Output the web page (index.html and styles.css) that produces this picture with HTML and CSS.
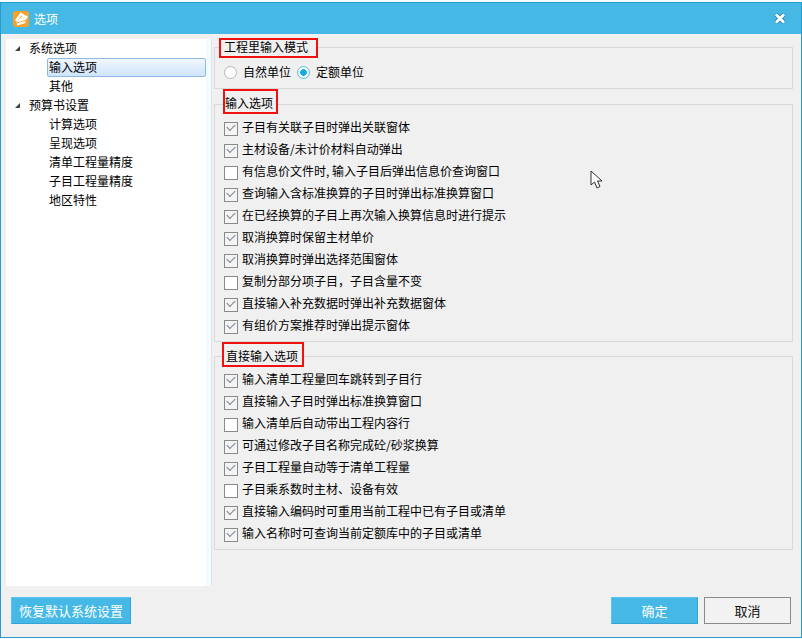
FILE: index.html
```html
<!DOCTYPE html>
<html lang="zh-CN">
<head>
<meta charset="utf-8">
<title>选项</title>
<link rel="stylesheet" href="styles.css">
</head>
<body>
<div class="window">
  <header class="titlebar">
    <svg class="logo" width="16" height="16" viewBox="0 0 16 16"><rect width="16" height="16" rx="3" fill="#f7a12b"/><path d="M3 10 L8 3 L11 5 L7 9.5 L12 8 L14 5" fill="none" stroke="#fff" stroke-width="2.4"/><path d="M4 13.5 L12.5 11" fill="none" stroke="#fff" stroke-width="2"/></svg>
    <span class="title">选项</span>
    <svg class="close" width="12" height="11" viewBox="0 0 12 11"><path d="M2 1.5 L10 9.5 M10 1.5 L2 9.5" stroke="#2b7fa8" stroke-width="4.4"/><path d="M2 1.5 L10 9.5 M10 1.5 L2 9.5" stroke="#fff" stroke-width="2.8"/></svg>
  </header>
  <div class="content">
    <div class="main">
      <nav class="tree">
        <div class="tree-node"><i class="arrow"></i>系统选项</div>
        <div class="tree-leaf selected">输入选项</div>
        <div class="tree-leaf">其他</div>
        <div class="tree-node"><i class="arrow"></i>预算书设置</div>
        <div class="tree-leaf">计算选项</div>
        <div class="tree-leaf">呈现选项</div>
        <div class="tree-leaf">清单工程量精度</div>
        <div class="tree-leaf">子目工程量精度</div>
        <div class="tree-leaf">地区特性</div>
      </nav>
      <div class="panel">
        <section class="group group-mode">
          <h2 class="legend legend-mode">工程里输入模式</h2>
          <div class="radios">
            <label class="radio"><i class="radio-mark"></i>自然单位</label>
            <label class="radio"><i class="radio-mark on"></i>定额单位</label>
          </div>
        </section>
        <section class="group group-input">
          <h2 class="legend legend-input">输入选项</h2>
          <div class="check on">子目有关联子目时弹出关联窗体</div>
          <div class="check on">主材设备/未计价材料自动弹出</div>
          <div class="check">有信息价文件时, 输入子目后弹出信息价查询窗口</div>
          <div class="check on">查询输入含标准换算的子目时弹出标准换算窗口</div>
          <div class="check on">在已经换算的子目上再次输入换算信息时进行提示</div>
          <div class="check on">取消换算时保留主材单价</div>
          <div class="check on">取消换算时弹出选择范围窗体</div>
          <div class="check">复制分部分项子目，子目含量不变</div>
          <div class="check on">直接输入补充数据时弹出补充数据窗体</div>
          <div class="check on">有组价方案推荐时弹出提示窗体</div>
        </section>
        <section class="group group-direct">
          <h2 class="legend legend-direct">直接输入选项</h2>
          <div class="check on">输入清单工程量回车跳转到子目行</div>
          <div class="check on">直接输入子目时弹出标准换算窗口</div>
          <div class="check">输入清单后自动带出工程内容行</div>
          <div class="check on">可通过修改子目名称完成砼/砂浆换算</div>
          <div class="check on">子目工程量自动等于清单工程量</div>
          <div class="check">子目乘系数时主材、设备有效</div>
          <div class="check on">直接输入编码时可重用当前工程中已有子目或清单</div>
          <div class="check on">输入名称时可查询当前定额库中的子目或清单</div>
        </section>
      </div>
    </div>
    <footer class="footer">
      <button class="btn btn-primary btn-reset">恢复默认系统设置</button>
      <div class="actions">
        <button class="btn btn-primary btn-action">确定</button>
        <button class="btn btn-default btn-action">取消</button>
      </div>
    </footer>
  </div>
  <svg class="cursor" width="14" height="20" viewBox="0 0 14 20"><path d="M1 1 V15 L4.5 12 L7 18 L10 16.5 L7.5 11 H12 Z" fill="#fff" stroke="#333" stroke-width="1"/></svg>
</div>
</body>
</html>
```
FILE: styles.css
```css
* { box-sizing: border-box; }
html, body { margin: 0; height: 100%; background: #fff; }
body { padding-top: 2px; font: 12px/16px "Noto Sans CJK SC", "Liberation Sans", sans-serif; color: #000; }
.window { position: relative; width: 802px; height: 636px; display: flex; flex-direction: column; background: #f0f0f0; border: 1px solid #2a9bc9; }
.titlebar { flex: 0 0 31px; display: flex; align-items: center; padding: 0 15px 0 12px; background: #45b8e6; color: #fff; }
.logo { margin-right: 5px; }
.title { font-size: 12px; flex: 1; }
.content { flex: 1; display: flex; flex-direction: column; padding: 5px 0 0 5px; }
.main { display: flex; height: 547px; }
.tree { width: 205px; background: #fff; border-right: 5px solid #f2fbff; box-shadow: 1px 0 0 #e3e3e3; }
.tree-node { position: relative; height: 19px; line-height: 17px; padding-left: 23px; }
.arrow { position: absolute; left: 9px; top: 7px; width: 0; height: 0; border-style: solid; border-width: 0 0 5px 5px; border-color: transparent transparent #444 transparent; }
.tree-leaf { height: 19px; line-height: 15px; margin-left: 41px; padding-left: 1px; width: 159px; border: 1px solid transparent; }
.tree-leaf.selected { background: linear-gradient(#f1f7fe, #cfe4fb); border-color: #8db9e6; border-radius: 2px; }
.panel { flex: 1; padding: 8px 8px 0 2px; margin-left: 1px; }
.group { position: relative; border: 1px solid #d9d9d9; }
.group-mode { height: 42px; padding: 15px 0 0 9px; }
.group-input { height: 238px; margin-top: 15px; padding: 11px 0 0 9px; }
.group-direct { height: 194px; margin-top: 14px; padding: 11px 0 0 9px; }
.legend { position: absolute; margin: 0; font-weight: 400; font-size: 12px; line-height: 16px; background: #f0f0f0; border: 2px solid #f01010; color: #000; }
.legend-mode { left: 4px; top: -10px; width: 99px; height: 20px; padding: 0 0 0 3px; line-height: 14px; }
.legend-input { left: 8px; top: -16px; width: 55px; height: 25px; padding: 4px 0 0 0; }
.legend-direct { left: 7px; top: -15px; width: 82px; height: 25px; padding: 4px 0 0 2px; }
.radios { display: flex; gap: 6px; }
.radio { display: flex; align-items: center; height: 18px; }
.radio-mark { width: 13px; height: 13px; margin-right: 6px; border-radius: 50%; background: #fff; border: 1px solid #b5b5b5; }
.radio-mark.on { border-color: #49bff0; background: radial-gradient(circle, #10aaf0 0 3px, #fff 3.6px); }
.check { position: relative; height: 22px; line-height: 22px; padding-left: 18px; }
.check::before { content: ""; position: absolute; left: 0; top: 6px; width: 12px; height: 12px; border: 1px solid #8a8a8a; background: #fff; }
.check.on::before { background: #f4f4f4; }
.check.on::after { content: ""; position: absolute; left: 3px; top: 8px; width: 7px; height: 4px; border-left: 1.5px solid #6f7f8f; border-bottom: 1.5px solid #6f7f8f; transform: rotate(-45deg); }
.footer { flex: 1; display: flex; justify-content: space-between; align-items: flex-start; padding: 11px 10px 0 5px; }
.actions { display: flex; gap: 6px; }
.btn { font: inherit; font-size: 13px; height: 27px; padding: 0; }
.btn-primary { background: #45b8e6; color: #fff; border: 1px solid #36a3d4; border-left-color: #5cc4ee; border-top-color: #5cc4ee; }
.btn-default { background: #f2f2f2; color: #111; border: 1px solid #8a8a8a; }
.btn-reset { width: 120px; }
.btn-action { width: 87px; }
.cursor { position: absolute; left: 589px; top: 167px; }
```
